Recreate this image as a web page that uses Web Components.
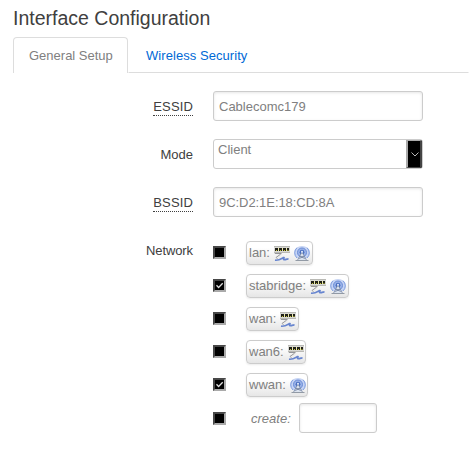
<!DOCTYPE html>
<html lang="en"><head><meta charset="utf-8"><title>Interface Configuration</title>
<style>
html,body{margin:0;background:#fff}
body{width:469px;height:450px;overflow:hidden;font:13px/18px "Liberation Sans",Arial,sans-serif;color:#404040}
</style></head><body>
<interface-page></interface-page>
<script>
const define=(name,html,init)=>customElements.define(name,class extends HTMLElement{
  connectedCallback(){
    if(this.shadowRoot)return;
    const root=this.attachShadow({mode:'open'});
    root.innerHTML=html;
    if(init)init(this,root);
  }
});

define('page-tab',`<style>
:host{display:block;box-sizing:border-box;height:36px;padding:9px 15px 0;border:1px solid transparent;border-bottom-color:#ddd;line-height:18px;color:#0069d6;white-space:nowrap;letter-spacing:.06px}
:host([active]){color:#808080;border-color:#ddd;border-bottom:0;border-radius:4px 4px 0 0;letter-spacing:0}
</style><slot></slot>`);

define('form-row',`<style>
:host{display:grid;grid-template-columns:180px 210px;column-gap:20px;min-height:30px}
.label{justify-self:end;padding-top:7px}
.label span{display:block;height:17px;white-space:nowrap}
:host([hint]) .label span{border-bottom:1px dotted #404040}
</style><div class="label"><span></span></div><div><slot></slot></div>`,(h,r)=>{
  const s=r.querySelector('span');s.textContent=h.getAttribute('label');s.style.letterSpacing=h.getAttribute('track')||'0';
});

define('text-field',`<style>
:host{display:flex;box-sizing:border-box;width:210px;height:30px;padding:6px 5px;border:1px solid #ccc;border-radius:3px;color:#808080;box-shadow:inset 0 1px 3px rgba(0,0,0,.1);white-space:nowrap}
</style><slot></slot>`);

define('select-field',`<style>
:host{display:flex;justify-content:space-between;box-sizing:border-box;width:210px;height:30px;border:1px solid #ccc;border-radius:3px;color:#808080;overflow:hidden}
.v{padding:1px 0 0 4px}
.b{box-sizing:border-box;width:16px;height:28px;background:#000;border:2px solid;border-color:#aaa #444 #444 #aaa;border-bottom-width:1px;border-top-width:1px}
svg{display:block;margin:11px 0 0 3px}
</style><span class="v"><slot></slot></span><span class="b"><svg width="8" height="5" viewBox="0 0 8 5"><path d="M.5.5 4 4 7.5.5" fill="none" stroke="#ccc" stroke-width=".9"/></svg></span>`);

define('check-box',`<style>
:host{display:block;box-sizing:border-box;width:13px;height:13px;background:#000;border:2px solid;border-color:#484848 #aaa #aaa #484848}
svg{display:none}:host([checked]) svg{display:block}
</style><svg width="9" height="9" viewBox="0 0 9 9"><path d="M1.5 4.2 3.6 6.5 7.7 2.2" fill="none" stroke="#ddd" stroke-width="1.3"/></svg>`);

define('net-icon',`<style>
:host{display:block;width:16px;height:16px}svg{display:block}
.wifi{display:none}:host([kind=wifi]) .wifi{display:block}:host([kind=wifi]) .eth{display:none}
</style>
<svg class="eth" width="16" height="16" viewBox="0 0 16 16">
<path d="M0 0h16v6.5H0z" fill="#d8d8d4"/>
<path d="M0 .5h16M0 6.5h16" stroke="#b9b9b4"/>
<path d="M1 2h3v3H1zM5 2h3v3H5zM9 2h3v3H9zM13 2h2v3h-2z" fill="#202018"/>
<path d="M2 4.5h1M6 4.5h1M10 4.5h1M13.5 4.5h1" stroke="#c2bd35"/>
<path d="M4.5 2v3M8.5 2v3M12.5 2v3" stroke="#e9e8a8"/>
<path d="M1 7h6.5l1 1.8L4 12.8 2 11.3 4.5 9z" fill="#ededeb"/>
<path d="M.8 7.5h6.7M2 11.5 6.6 8.2M2.2 11.6l1.2 1.2" fill="none" stroke="#8a8b90" stroke-width=".9"/>
<path d="M1 14.2c3.5.5 6-1.2 8.4-2.6.9-.4.8.3.4.8-.7 1 0 1.6 1.5 1.2 1-.3 1.8-.7 3.2-.7" fill="none" stroke="#6785cf" stroke-width="1.7"/>
</svg>
<svg class="wifi" width="16" height="16" viewBox="0 0 16 16">
<ellipse cx="8" cy="6.7" rx="8" ry="6.7" fill="#c6d4f4"/>
<path d="M3 12a7 7 0 0 1 0-10.3M13 12a7 7 0 0 0 0-10.3" fill="none" stroke="#819fdf"/>
<circle cx="8" cy="6.5" r="4.5" fill="#9bb3e8" stroke="#6c8dd7"/>
<circle cx="8" cy="6.2" r="2.4" fill="#4b70c0"/>
<path d="M8 6 3.7 14h8.6z" fill="#dbe3ef"/>
<path d="M7.5 6.8 3.6 14M8.5 6.8l3.9 7.2M6 10.6h4M5 12.5l5-2M11 12.5l-5-2" fill="none" stroke="#73829f" stroke-width=".75"/>
<path d="M1.5 14.5h13" stroke="#929aa5"/>
<circle cx="8" cy="5.8" r="1" fill="#e5ecfc"/>
</svg>`);

define('net-badge',`<style>
:host{display:flex;box-sizing:border-box;height:24px;padding:2px 2px 3px;border:1px solid #ccc;border-radius:4px;background:linear-gradient(#fff,#fff 25%,#e6e6e6);box-shadow:0 1px 2px rgba(0,0,0,.08);color:#808080;gap:4px;white-space:nowrap}
.icons{display:flex;gap:4px;padding-top:2px;margin-left:auto;margin-right:2px}
</style><span><slot></slot></span><span class="icons"></span>`,(h,r)=>{
  h.style.width=h.getAttribute('width')+'px';
  for(const k of h.getAttribute('icons').split(' ')){
    const i=document.createElement('net-icon');i.setAttribute('kind',k);r.querySelector('.icons').append(i);
  }
});

define('network-option',`<style>
:host{display:flex;height:24px;margin-bottom:9px}
check-box{margin:5px 20px 0 0}
</style><check-box></check-box><slot></slot>`,(h,r)=>{
  if(h.hasAttribute('checked'))r.querySelector('check-box').setAttribute('checked','');
});

define('interface-page',`<style>
:host{display:block;padding-left:13px}
h1{margin:0;height:37px;box-sizing:border-box;padding-top:4px;font-size:19.5px;line-height:28px;font-weight:400;color:#404040;white-space:nowrap}
nav{display:flex}
.active{width:115px;box-sizing:border-box}
.rest{flex:1;padding-left:17px}
form{display:grid;row-gap:18px;padding-top:18px}
.list{padding-top:6px;width:240px}
.create{display:flex;margin-top:-3px}
.create check-box{margin:9px 25px 0 0}
.create em{width:48px;padding-top:7px}
.create em{color:#808080}
.create text-field{width:78px}
</style>
<h1>Interface Configuration</h1>
<nav><page-tab class="active" active>General Setup</page-tab><page-tab class="rest">Wireless Security</page-tab></nav>
<form>
<form-row label="ESSID" hint track=".15px"><text-field>Cablecomc179</text-field></form-row>
<form-row label="Mode"><select-field>Client</select-field></form-row>
<form-row label="BSSID" hint track=".15px"><text-field style="letter-spacing:-.06px">9C:D2:1E:18:CD:8A</text-field></form-row>
<form-row label="Network" track="-.1px"><div class="list">
<network-option><net-badge width="67" icons="eth wifi">lan:</net-badge></network-option>
<network-option checked><net-badge width="103" icons="eth wifi">stabridge:</net-badge></network-option>
<network-option><net-badge width="53" icons="eth">wan:</net-badge></network-option>
<network-option><net-badge width="60" icons="eth">wan6:</net-badge></network-option>
<network-option checked><net-badge width="62" icons="wifi">wwan:</net-badge></network-option>
<div class="create"><check-box></check-box><em>create:</em><text-field></text-field></div>
</div></form-row>
</form>`);
</script></body></html>
